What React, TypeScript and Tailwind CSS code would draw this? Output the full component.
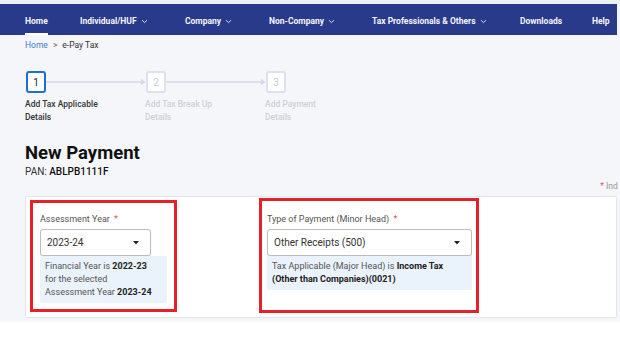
import React from "react";

const Chevron = () => (
  <svg width="7" height="5" viewBox="0 0 7 5" className="ml-[4px] inline-block shrink-0">
    <path d="M1 1.2 L3.5 3.6 L6 1.2" stroke="#d8dcef" strokeWidth="1" fill="none" />
  </svg>
);

const Caret = () => (
  <svg width="6" height="4" viewBox="0 0 6 4">
    <path d="M0 0 L6 0 L3 3.5 Z" fill="#222" />
  </svg>
);

export default function App() {
  return (
    <div
      className="w-[620px] h-[348px] overflow-hidden bg-[#f5f6fa] flex flex-col"
      style={{ fontFamily: "Roboto, 'Liberation Sans', sans-serif" }}
    >
      <div className="h-[4px] bg-[#eef0f3] shrink-0" />
      <nav className="h-[31px] shrink-0 mr-[3px] bg-[#2a3a8b] flex items-stretch text-[8.5px] font-bold text-[#f4f5fb] whitespace-nowrap pl-[25px]">
        <div className="w-[55px] shrink-0 flex items-stretch">
          <span className="flex items-center border-b-2 border-white pt-[5px]">Home</span>
        </div>
        <div className="w-[105px] shrink-0 flex items-center pt-[3px]">Individual/HUF<Chevron /></div>
        <div className="w-[84px] shrink-0 flex items-center pt-[3px]">Company<Chevron /></div>
        <div className="w-[103px] shrink-0 flex items-center pt-[3px]">Non-Company<Chevron /></div>
        <div className="w-[148px] shrink-0 flex items-center pt-[3px]">Tax Professionals &amp; Others<Chevron /></div>
        <div className="w-[72px] shrink-0 flex items-center pt-[3px]">Downloads</div>
        <div className="shrink-0 flex items-center pt-[3px]">Help</div>
      </nav>
      <div className="h-[21px] shrink-0 flex items-center pl-[25px] text-[8.5px] text-[#333]">
        <span className="text-[#3c7fd0]">Home</span>
        <span className="mx-[5px] text-[#666]">&gt;</span>
        <span>e-Pay Tax</span>
      </div>

      {/* Stepper */}
      <div className="pl-[26px] pt-[15px] flex shrink-0">
        {[
          { n: "1", l1: "Add Tax Applicable", l2: "Details", active: true },
          { n: "2", l1: "Add Tax Break Up", l2: "Details", active: false },
          { n: "3", l1: "Add Payment", l2: "Details", active: false },
        ].map((s, i) => (
          <div key={s.n} className="flex flex-col w-[120px]">
            <div className="flex items-center">
              <div
                className={
                  s.active
                    ? "w-[20px] h-[22px] border-2 border-[#1f6fd1] rounded-[3px] bg-white flex items-center justify-center text-[10px] text-[#222]"
                    : "w-[20px] h-[22px] border-2 border-[#dfe1ee] rounded-[3px] bg-white flex items-center justify-center text-[10px] text-[#c9cbd8]"
                }
              >
                {s.n}
              </div>
              {i < 2 && (
                <svg width="100" height="8" viewBox="0 0 100 8">
                  <line x1="0" y1="4" x2="97" y2="4" stroke="#d6d8ea" strokeWidth="1.3" />
                  <path d="M95 1 L100 4 L95 7 Z" fill="#d6d8ea" />
                </svg>
              )}
            </div>
            <div
              className={
                s.active
                  ? "mt-[5px] text-[8.5px] leading-[13px] font-medium text-[#333] -ml-[1px]"
                  : "mt-[5px] text-[8.5px] leading-[13px] font-medium text-[#cfd0d9] -ml-[1px]"
              }
            >
              <div>{s.l1}</div>
              <div>{s.l2}</div>
            </div>
          </div>
        ))}
      </div>

      <div className="pl-[25px] mt-[18px] shrink-0">
        <div className="text-[18.5px] leading-[22px] font-bold text-[#111]">New Payment</div>
        <div className="text-[10px] leading-[12px] text-[#333] mt-[2px]">
          PAN: <span className="font-medium text-[#111]">ABLPB1111F</span>
        </div>
      </div>
      <div className="h-[14px] shrink-0 flex justify-end items-center text-[8.5px] text-[#999] mt-[1px] whitespace-nowrap">
        <span className="text-[#e25555] mr-[2px]">*</span>
        <span className="w-[14px] overflow-hidden">Ind</span>
      </div>

      {/* Card */}
      <div className="ml-[25px] mr-[3px] mt-[3px] h-[122px] shrink-0 bg-white border border-[#e3e5ec] rounded-[2px] flex items-start pt-[3px]">
        <div className="ml-[4px] w-[147px] h-[112px] border-[3px] border-[#e4202a] pl-[7px] pt-[10px]">
          <div className="text-[9px] text-[#555] leading-[12px]">
            Assessment Year <span className="text-[#e25555] ml-[2px]">*</span>
          </div>
          <div className="mt-[4px] w-[111px] h-[27px] border border-[#bcbcbc] rounded-[3px] bg-white flex items-center justify-between pl-[6px] pr-[11px] shadow-[0_1px_1px_rgba(0,0,0,0.12)]">
            <span className="text-[10px] text-[#333]">2023-24</span>
            <Caret />
          </div>
          <div className="w-[127px] bg-[#eaf2fc] rounded-[2px] pl-[5px] pt-[4px] pb-[4px] text-[9px] leading-[13px] text-[#555]">
            <div>Financial Year is <span className="font-bold text-[#222]">2022-23</span></div>
            <div>for the selected</div>
            <div>Assessment Year <span className="font-bold text-[#222]">2023-24</span></div>
          </div>
        </div>
        <div className="ml-[82px] -mt-[2px] w-[220px] h-[115px] border-[3px] border-[#e4202a] pl-[5px] pt-[12px]">
          <div className="text-[9px] text-[#555] leading-[12px]">
            Type of Payment (Minor Head) <span className="text-[#e25555] ml-[2px]">*</span>
          </div>
          <div className="mt-[4px] w-[205px] h-[27px] border border-[#bcbcbc] rounded-[3px] bg-white flex items-center justify-between pl-[6px] pr-[11px] shadow-[0_1px_1px_rgba(0,0,0,0.12)]">
            <span className="text-[10px] text-[#333]">Other Receipts (500)</span>
            <Caret />
          </div>
          <div className="w-[205px] bg-[#eaf2fc] rounded-[2px] pl-[5px] pt-[4px] pb-[4px] text-[9px] leading-[13px] text-[#555]">
            <div>Tax Applicable (Major Head) is <span className="font-bold text-[#222]">Income Tax</span></div>
            <div className="font-bold text-[#222]">(Other than Companies)(0021)</div>
          </div>
        </div>
      </div>
      <div className="h-[4px] shrink-0" />
      <div className="flex-1 bg-white" />
    </div>
  );
}
